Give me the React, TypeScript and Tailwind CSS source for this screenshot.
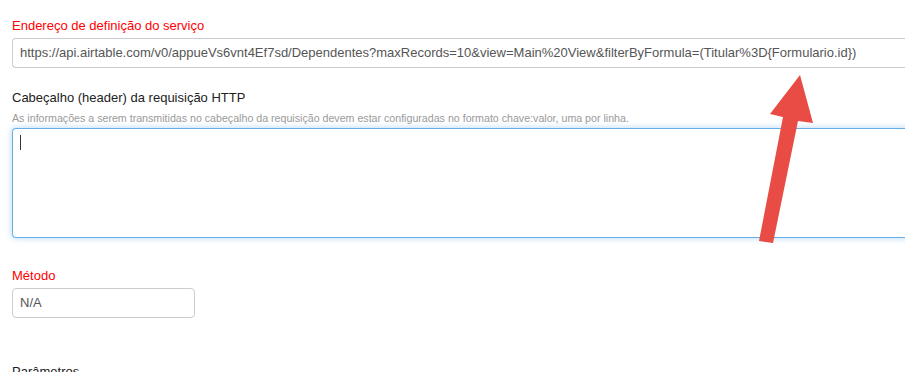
const url =
  "https://api.airtable.com/v0/appueVs6vnt4Ef7sd/Dependentes?maxRecords=10&view=Main%20View&filterByFormula=(Titular%3D{Formulario.id})"

export default function App() {
  return (
    <div className="relative h-[372px] w-[905px] overflow-hidden bg-white font-['Liberation_Sans',Arial,sans-serif] text-[13px]">
      <div className="w-[1000px] pl-[12px] pt-[17px]">
        {/* Endereço */}
        <div className="mb-[3px] h-[18px] leading-[18px] text-[#ff0000]">
          Endereço de definição do serviço
        </div>
        <div className="flex h-[30px] items-center rounded-l-[4px] border border-r-0 border-[#cccccc] pl-[7px] text-[#555555]">
          {url}
        </div>

        {/* Cabeçalho */}
        <div className="mt-[20px] h-[19px] leading-[19px] text-[#222222]">
          Cabeçalho (header) da requisição HTTP
        </div>
        <div className="mt-[4px] h-[14px] text-[10.65px] leading-[14px] text-[#9a9a9a]">
          As informações a serem transmitidas no cabeçalho da requisição devem estar configuradas no formato chave:valor, uma por linha.
        </div>
        <div className="mt-[3px] h-[110px] rounded-l-[4px] border border-r-0 border-[#66afe9] pl-[7px] pt-[6px] shadow-[0_0_6px_rgba(102,175,233,0.5)]">
          <div className="h-[15px] w-px bg-[#333333]" />
        </div>

        {/* Método */}
        <div className="mt-[29px] mb-[3px] h-[18px] leading-[18px] text-[#ff0000]">
          Método
        </div>
        <div className="flex h-[30px] w-[183px] items-center rounded-[4px] border border-[#cccccc] pl-[7px] text-[#555555]">
          N/A
        </div>

        {/* Parâmetros */}
        <div className="mt-[44px] h-[19px] leading-[19px] text-[#222222]">
          Parâmetros
        </div>
      </div>

      {/* seta */}
      <svg className="absolute left-0 top-0" width="905" height="372" viewBox="0 0 905 372">
        <polygon
          points="800,75 813,123 798,121 773,243 759,241 783,117 770,114"
          fill="#e84c44"
        />
      </svg>
    </div>
  )
}
